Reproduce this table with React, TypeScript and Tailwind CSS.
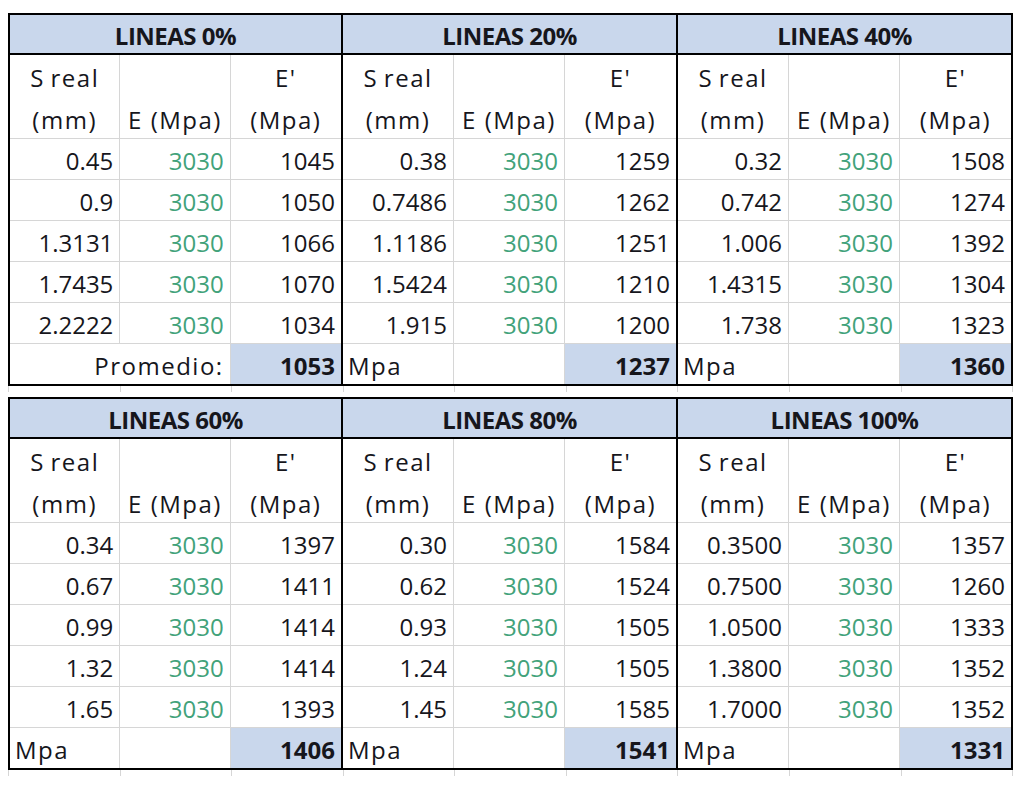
import React from 'react';

type Block = {
  title: string;
  rows: [string, string][];
  total: string;
  label: 'Promedio:' | 'Mpa';
};

const TOP: Block[] = [
  {
    title: 'LINEAS 0%',
    rows: [
      ['0.45', '1045'],
      ['0.9', '1050'],
      ['1.3131', '1066'],
      ['1.7435', '1070'],
      ['2.2222', '1034'],
    ],
    total: '1053',
    label: 'Promedio:',
  },
  {
    title: 'LINEAS 20%',
    rows: [
      ['0.38', '1259'],
      ['0.7486', '1262'],
      ['1.1186', '1251'],
      ['1.5424', '1210'],
      ['1.915', '1200'],
    ],
    total: '1237',
    label: 'Mpa',
  },
  {
    title: 'LINEAS 40%',
    rows: [
      ['0.32', '1508'],
      ['0.742', '1274'],
      ['1.006', '1392'],
      ['1.4315', '1304'],
      ['1.738', '1323'],
    ],
    total: '1360',
    label: 'Mpa',
  },
];

const BOTTOM: Block[] = [
  {
    title: 'LINEAS 60%',
    rows: [
      ['0.34', '1397'],
      ['0.67', '1411'],
      ['0.99', '1414'],
      ['1.32', '1414'],
      ['1.65', '1393'],
    ],
    total: '1406',
    label: 'Mpa',
  },
  {
    title: 'LINEAS 80%',
    rows: [
      ['0.30', '1584'],
      ['0.62', '1524'],
      ['0.93', '1505'],
      ['1.24', '1505'],
      ['1.45', '1585'],
    ],
    total: '1541',
    label: 'Mpa',
  },
  {
    title: 'LINEAS 100%',
    rows: [
      ['0.3500', '1357'],
      ['0.7500', '1260'],
      ['1.0500', '1333'],
      ['1.3800', '1352'],
      ['1.7000', '1352'],
    ],
    total: '1331',
    label: 'Mpa',
  },
];

const cell = 'w-1/3 flex items-center px-[6px] pt-[4px] whitespace-nowrap';
const grid = 'border-r border-[#d6d6d6]';
const word = 'tracking-[1.5px]';

const BlockTable: React.FC<{ block: Block; first: boolean }> = ({ block, first }) => {
  return (
    <div className={`w-[335px] flex flex-col border-y-2 border-r-2 border-black ${first ? 'border-l-2' : ''}`}>
      {/* titulo */}
      <div className="h-[40px] flex items-center justify-center pt-[4px] bg-[#c9d7ec] border-b-2 border-black font-bold tracking-[-0.5px]">
        {block.title}
      </div>

      {/* encabezados */}
      <div className="flex h-[42px]">
        <div className={`${cell} ${grid} ${word} [word-spacing:-2px] justify-center`}>S real</div>
        <div className={`${cell} ${grid}`}></div>
        <div className={`${cell} ${word} justify-center`}>E'</div>
      </div>
      <div className="flex h-[42px] border-b border-[#d6d6d6]">
        <div className={`${cell} ${grid} ${word} justify-center`}>(mm)</div>
        <div className={`${cell} ${grid} ${word} justify-center`}>E (Mpa)</div>
        <div className={`${cell} ${word} justify-center`}>(Mpa)</div>
      </div>

      {/* datos */}
      {block.rows.map((r, i) => (
        <div key={i} className="flex h-[41px] border-b border-[#d6d6d6]">
          <div className={`${cell} ${grid} justify-end`}>{r[0]}</div>
          <div className={`${cell} ${grid} justify-end text-[#42a27a]`}>3030</div>
          <div className={`${cell} justify-end`}>{r[1]}</div>
        </div>
      ))}

      {/* total */}
      <div className="flex h-[40px]">
        {block.label === 'Promedio:' ? (
          <div className={`w-2/3 flex items-center px-[6px] pt-[4px] ${grid} ${word} justify-end`}>Promedio:</div>
        ) : (
          <>
            <div className={`${cell} ${grid} ${word} !px-[5px]`}>Mpa</div>
            <div className={`${cell} ${grid}`}></div>
          </>
        )}
        <div className={`${cell} justify-end bg-[#c9d7ec] font-bold`}>{block.total}</div>
      </div>
    </div>
  );
};

const Stubs: React.FC = () => (
  <div className="flex w-[1005px] h-[6px] border-l border-[#d6d6d6]">
    {Array.from({ length: 9 }).map((_, i) => (
      <div key={i} className="flex-1 border-r border-[#d6d6d6]" />
    ))}
  </div>
);

export default function App() {
  return (
    <div
      className="w-[1024px] h-[803px] bg-white pt-[13px] pl-[8px] text-[24px] leading-none text-[#16161c]"
      style={{ fontFamily: '"Open Sans", Lato, sans-serif' }}
    >
      <div className="flex">
        {TOP.map((b, i) => (
          <BlockTable key={b.title} block={b} first={i === 0} />
        ))}
      </div>
      <Stubs />
      <div className="h-[5px]" />
      <div className="flex">
        {BOTTOM.map((b, i) => (
          <BlockTable key={b.title} block={b} first={i === 0} />
        ))}
      </div>
      <Stubs />
    </div>
  );
}
